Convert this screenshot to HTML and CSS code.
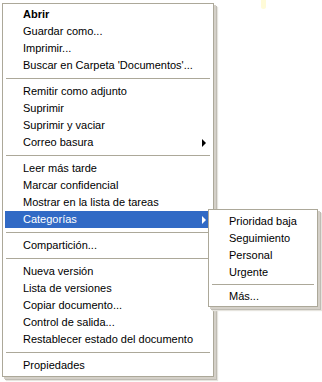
FILE: index.html
```html
<!DOCTYPE html>
<html lang="es">
<head>
    <meta charset="UTF-8">
    <title>Menú contextual</title>
    <link rel="stylesheet" href="styles.css">
</head>
<body>
    <div class="stage">
        <span class="blob"></span>
        <!-- Main context menu -->
        <div class="menu main">
            <div class="item bold">Abrir</div>
            <div class="item">Guardar como...</div>
            <div class="item">Imprimir...</div>
            <div class="item">Buscar en Carpeta 'Documentos'...</div>
            <div class="sep"></div>
            <div class="item">Remitir como adjunto</div>
            <div class="item">Suprimir</div>
            <div class="item">Suprimir y vaciar</div>
            <div class="item sub">Correo basura</div>
            <div class="sep"></div>
            <div class="item">Leer más tarde</div>
            <div class="item">Marcar confidencial</div>
            <div class="item">Mostrar en la lista de tareas</div>
            <div class="item sub active">Categorías</div>
            <div class="sep"></div>
            <div class="item">Compartición...</div>
            <div class="sep"></div>
            <div class="item">Nueva versión</div>
            <div class="item">Lista de versiones</div>
            <div class="item">Copiar documento...</div>
            <div class="item">Control de salida...</div>
            <div class="item">Restablecer estado del documento</div>
            <div class="sep"></div>
            <div class="item">Propiedades</div>
        </div>

        <!-- Categorías submenu -->
        <div class="menu submenu">
            <div class="item">Prioridad baja</div>
            <div class="item">Seguimiento</div>
            <div class="item">Personal</div>
            <div class="item">Urgente</div>
            <div class="sep"></div>
            <div class="item">Más...</div>
        </div>
    </div>
</body>
</html>
```

FILE: styles.css
```css
body {
    margin: 0;
    background-color: white;
    font-family: Tahoma, "Liberation Sans", Arial, sans-serif;
    font-size: 11px;
    color: black;
}
.stage {
    position: relative;
    width: 322px;
    height: 382px;
    padding: 3px 0 0 2px;
    box-sizing: border-box;
}
.blob {
    position: absolute;
    left: 261px;
    top: 0;
    width: 5px;
    height: 9px;
    border-radius: 0 0 3px 3px;
    background-color: #fffbd8;
}
.menu {
    background-color: white;
    border: 1px solid #aca899;
    padding: 2px;
    box-shadow: 2px 2px 0 #d4d0c8, 3px 3px 0 #bfbcb4, 4px 4px 1px #e6e4de;
}
.main {
    width: 212px;
    box-sizing: border-box;
}
.item {
    position: relative;
    height: 17px;
    line-height: 17px;
    padding-left: 18px;
    white-space: nowrap;
}
.bold {
    font-weight: bold;
}
.sub::after {
    content: "";
    position: absolute;
    right: 5px;
    top: 5px;
    border-top: 4px solid transparent;
    border-bottom: 4px solid transparent;
    border-left: 4px solid black;
}
.active {
    background-color: #316ac5;
    color: white;
}
.active::after {
    border-left-color: white;
}
.sep {
    height: 9px;
    display: flex;
    align-items: center;
}
.sep::before {
    content: "";
    flex: 1;
    margin: 0 1px;
    border-top: 1px solid #aca899;
}
.submenu {
    position: absolute;
    left: 208px;
    top: 209px;
    width: 110px;
    box-sizing: border-box;
    padding: 3px 2px 1px;
}
.submenu .sep {
    height: 7px;
}
```
